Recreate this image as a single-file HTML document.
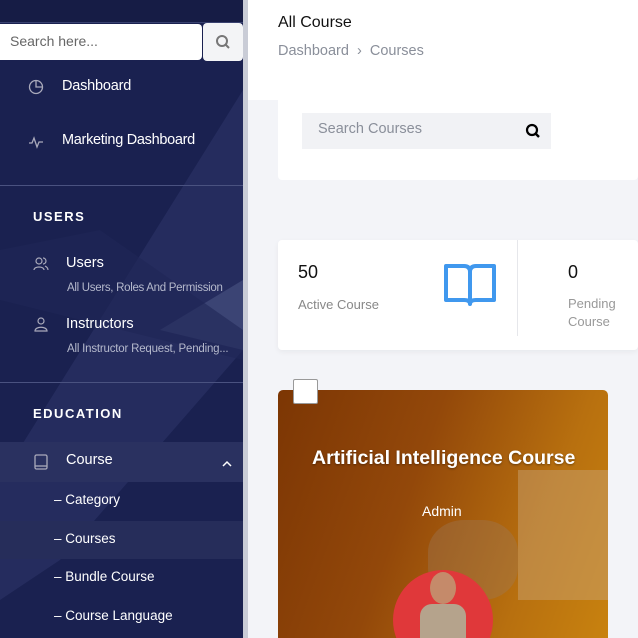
<!DOCTYPE html>
<html><head><meta charset="utf-8"><style>
*{margin:0;padding:0;box-sizing:border-box}
body{width:638px;height:638px;overflow:hidden;font-family:"Liberation Sans",sans-serif;background:#f3f4f8;position:relative}
.sb{position:absolute;left:0;top:0;width:243px;height:638px;background:#1a2150;overflow:hidden}
.sb .diag{position:absolute;left:0;top:0;width:243px;height:638px}
.scroll{position:absolute;left:243px;top:0;width:5px;height:638px;background:#c9ccd6}
.t{position:absolute;color:#fff;white-space:nowrap}
.main{position:absolute;left:248px;top:0;width:390px;height:100px;background:#fff}
</style></head><body>
<div class="sb">
<svg class="diag" width="243" height="638">
<polygon points="0,0 243,0 243,638 0,638" fill="#1a2150"/>
<polygon points="243,90 243,350 60,560 0,600 0,480" fill="#283061" opacity="0.8"/>
<polygon points="160,330 243,280 243,350" fill="#3e4777" opacity="0.9"/>
<polygon points="0,250 100,230 243,330 243,360 0,300" fill="#1f2756" opacity="0.6"/>
<polygon points="0,0 243,0 243,22 0,22" fill="#161c45"/>
</svg>
<div style="position:absolute;left:0;top:22px;width:243px;height:1px;background:#3a4270"></div>
<div style="position:absolute;left:0;top:24px;width:202px;height:36px;background:#fff;border-radius:0 4px 4px 0"></div>
<div class="t" style="left:10px;top:33px;color:#666;font-size:14px">Search here...</div>
<div style="position:absolute;left:203px;top:23px;width:40px;height:38px;background:#f3f4f6;border-radius:4px"></div>
<svg style="position:absolute;left:215px;top:34px" width="16" height="16"><circle cx="7" cy="7" r="5" fill="none" stroke="#777" stroke-width="2"/><line x1="11" y1="11" x2="14" y2="14" stroke="#777" stroke-width="2"/></svg>
<svg style="position:absolute;left:28px;top:79px" width="16" height="16"><circle cx="8" cy="8" r="6.5" fill="none" stroke="#aab" stroke-width="1.3"/><path d="M8 1.5V8H14.5" fill="none" stroke="#aab" stroke-width="1.3"/></svg>
<div class="t" style="left:62px;top:78px;font-size:14.5px;letter-spacing:-0.2px">Dashboard</div>
<svg style="position:absolute;left:28px;top:134px" width="16" height="16"><path d="M1 9H4L6 4L9 13L11 8H15" fill="none" stroke="#aab" stroke-width="1.3"/></svg>
<div class="t" style="left:62px;top:132px;font-size:14.5px;letter-spacing:-0.3px">Marketing Dashboard</div>
<div style="position:absolute;left:0;top:185px;width:243px;height:1px;background:#4a5280"></div>
<div class="t" style="left:33px;top:209px;font-size:13px;font-weight:bold;letter-spacing:1.5px">USERS</div>
<svg style="position:absolute;left:33px;top:256px" width="16" height="16"><circle cx="6" cy="5" r="3" fill="none" stroke="#aab" stroke-width="1.2"/><path d="M1 14C1 10 11 10 11 14M10 2A3 3 0 0 1 10 8M12 10C14 11 15 12 15 14" fill="none" stroke="#aab" stroke-width="1.2"/></svg>
<div class="t" style="left:66px;top:255px;font-size:14.5px">Users</div>
<div class="t" style="left:67px;top:282px;font-size:11.5px;color:#b5b9cc;letter-spacing:-0.3px">All Users, Roles And Permission</div>
<svg style="position:absolute;left:33px;top:317px" width="16" height="16"><circle cx="8" cy="4" r="3" fill="none" stroke="#aab" stroke-width="1.2"/><path d="M2 14C2 9 14 9 14 14Z" fill="none" stroke="#aab" stroke-width="1.2"/></svg>
<div class="t" style="left:66px;top:316px;font-size:14.5px">Instructors</div>
<div class="t" style="left:67px;top:343px;font-size:11.5px;color:#b5b9cc;letter-spacing:-0.2px">All Instructor Request, Pending...</div>
<div style="position:absolute;left:0;top:382px;width:243px;height:1px;background:#4a5280"></div>
<div class="t" style="left:33px;top:406px;font-size:13px;font-weight:bold;letter-spacing:1.5px">EDUCATION</div>
<div style="position:absolute;left:0;top:442px;width:243px;height:40px;background:#2a3160"></div>
<svg style="position:absolute;left:34px;top:454px" width="14" height="16"><rect x="1" y="1" width="12" height="14" rx="1.5" fill="none" stroke="#aab" stroke-width="1.3"/><line x1="1" y1="12" x2="13" y2="12" stroke="#aab" stroke-width="1.3"/></svg>
<div class="t" style="left:66px;top:452px;font-size:14.5px">Course</div>
<svg style="position:absolute;left:222px;top:460px" width="10" height="8"><path d="M1 6L5 2L9 6" fill="none" stroke="#fff" stroke-width="1.5"/></svg>
<div class="t" style="left:54px;top:492px;font-size:13.5px">– Category</div>
<div style="position:absolute;left:0;top:521px;width:243px;height:38px;background:#262d5a"></div>
<div class="t" style="left:54px;top:531px;font-size:13.5px">– Courses</div>
<div class="t" style="left:54px;top:569px;font-size:13.5px">– Bundle Course</div>
<div class="t" style="left:54px;top:608px;font-size:13.5px">– Course Language</div>
</div>
<div class="scroll"></div>
<div class="main"></div>
<div class="t" style="left:278px;top:14px;color:#111;font-size:16px">All Course</div>
<div class="t" style="left:278px;top:43px;color:#8a8f9a;font-size:14.5px">Dashboard &nbsp;›&nbsp; Courses</div>
<div style="position:absolute;left:278px;top:100px;width:360px;height:80px;background:#fff;border-radius:0 0 4px 4px"></div>
<div style="position:absolute;left:302px;top:113px;width:249px;height:36px;background:#f1f2f5"></div>
<div class="t" style="left:318px;top:121px;color:#8a8f9a;font-size:14.5px">Search Courses</div>
<svg style="position:absolute;left:525px;top:123px" width="16" height="16"><circle cx="7" cy="7" r="5" fill="none" stroke="#000" stroke-width="2.2"/><line x1="10.5" y1="10.5" x2="14" y2="14" stroke="#000" stroke-width="2.4"/></svg>
<div style="position:absolute;left:278px;top:240px;width:360px;height:110px;background:#fff;border-radius:4px;box-shadow:0 2px 6px rgba(0,0,0,.05)"></div>
<div style="position:absolute;left:517px;top:240px;width:1px;height:96px;background:#e6e7eb"></div>
<div class="t" style="left:298px;top:262px;color:#111;font-size:18px">50</div>
<div class="t" style="left:298px;top:297px;color:#888;font-size:13px">Active Course</div>
<svg style="position:absolute;left:444px;top:264px" width="52" height="46"><path d="M2 2H20Q26 2 26 8V40Q26 36 20 36H2Z M50 2H32Q26 2 26 8V40Q26 36 32 36H50Z" fill="none" stroke="#4098ee" stroke-width="4" stroke-linejoin="round"/></svg>
<div class="t" style="left:568px;top:262px;color:#111;font-size:18px">0</div>
<div class="t" style="left:568px;top:295px;color:#999;font-size:13px;line-height:18px">Pending<br>Course</div>
<div style="position:absolute;left:278px;top:390px;width:330px;height:248px;border-radius:5px 5px 0 0;background:linear-gradient(110deg,#7c3604 0%,#93480a 40%,#b8700f 75%,#c8820f 100%);overflow:hidden">
<div style="position:absolute;left:240px;top:80px;width:90px;height:130px;background:#c9a67a;opacity:.45"></div>
<div style="position:absolute;left:150px;top:130px;width:90px;height:80px;background:#9a7a60;opacity:.35;border-radius:40%"></div>
<div style="position:absolute;left:115px;top:180px;width:100px;height:100px;border-radius:50%;background:#e0383a"></div>
<div style="position:absolute;left:152px;top:182px;width:26px;height:32px;border-radius:50%;background:#c58a6a"></div>
<div style="position:absolute;left:142px;top:214px;width:46px;height:40px;border-radius:12px 12px 0 0;background:#b5a38c"></div>
</div>
<div style="position:absolute;left:293px;top:379px;width:25px;height:25px;background:#fff;border:1px solid #999;border-radius:2px"></div>
<div class="t" style="left:312px;top:447px;font-size:19.5px;font-weight:bold;letter-spacing:0;text-shadow:0 1px 2px rgba(0,0,0,.4)">Artificial Intelligence Course</div>
<div class="t" style="left:422px;top:503px;font-size:14px">Admin</div>
</body></html>
